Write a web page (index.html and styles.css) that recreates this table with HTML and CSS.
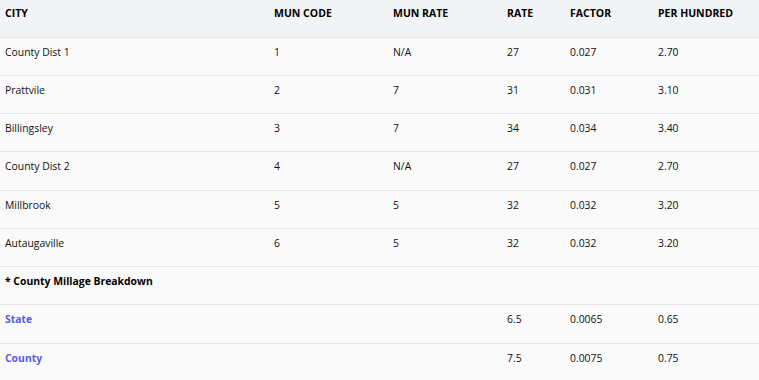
FILE: index.html
```html
<!DOCTYPE html>
<html lang="en">
  <head>
    <meta charset="UTF-8" />
    <title>Millage Rates</title>
    <link rel="stylesheet" href="styles.css">
  </head>
  <body>
    <table class="rates">
      <colgroup>
        <col class="c-city" />
        <col class="c-code" />
        <col class="c-mun" />
        <col class="c-rate" />
        <col class="c-factor" />
        <col class="c-hundred" />
      </colgroup>
      <thead>
        <tr>
          <th>CITY</th>
          <th>MUN CODE</th>
          <th>MUN RATE</th>
          <th>RATE</th>
          <th>FACTOR</th>
          <th>PER HUNDRED</th>
        </tr>
      </thead>
      <tbody>
        <tr><td>County Dist 1</td><td>1</td><td>N/A</td><td>27</td><td>0.027</td><td>2.70</td></tr>
        <tr><td>Prattvile</td><td>2</td><td>7</td><td>31</td><td>0.031</td><td>3.10</td></tr>
        <tr><td>Billingsley</td><td>3</td><td>7</td><td>34</td><td>0.034</td><td>3.40</td></tr>
        <tr><td>County Dist 2</td><td>4</td><td>N/A</td><td>27</td><td>0.027</td><td>2.70</td></tr>
        <tr><td>Millbrook</td><td>5</td><td>5</td><td>32</td><td>0.032</td><td>3.20</td></tr>
        <tr><td>Autaugaville</td><td>6</td><td>5</td><td>32</td><td>0.032</td><td>3.20</td></tr>
        <tr class="section"><td colspan="6">* County Millage Breakdown</td></tr>
        <tr><td class="link">State</td><td></td><td></td><td>6.5</td><td>0.0065</td><td>0.65</td></tr>
        <tr><td class="link">County</td><td></td><td></td><td>7.5</td><td>0.0075</td><td>0.75</td></tr>
      </tbody>
    </table>
  </body>
</html>
```

FILE: styles.css
```css
* {
  margin: 0;
  padding: 0;
  box-sizing: border-box;
}

body {
  background: #fafafa;
  font-family: "Open Sans", "Noto Sans", sans-serif;
  font-size: 10.4px;
  color: #111;
}

.rates {
  width: 759px;
  border-collapse: collapse;
  table-layout: fixed;
}

.c-city { width: 269px; }
.c-code { width: 119px; }
.c-mun { width: 114px; }
.c-rate { width: 63px; }
.c-factor { width: 88px; }
.c-hundred { width: 106px; }

.rates th {
  background: #f2f3f5;
  text-align: left;
  font-weight: 700;
  font-size: 10.5px;
  color: #000;
  height: 37px;
  padding: 5px 5px 0;
  vertical-align: top;
  line-height: 16px;
  border-bottom: 1px solid #e6e6e6;
}

.rates td {
  height: 38.25px;
  padding: 6px 5px 0;
  vertical-align: top;
  line-height: 16px;
  border-bottom: 1px solid #e6e6e6;
}

.rates tbody tr:last-child td {
  border-bottom: none;
}

.section td {
  font-weight: 700;
  color: #000;
}

.rates td.link {
  color: #5b5be8;
  font-weight: 700;
}
```
